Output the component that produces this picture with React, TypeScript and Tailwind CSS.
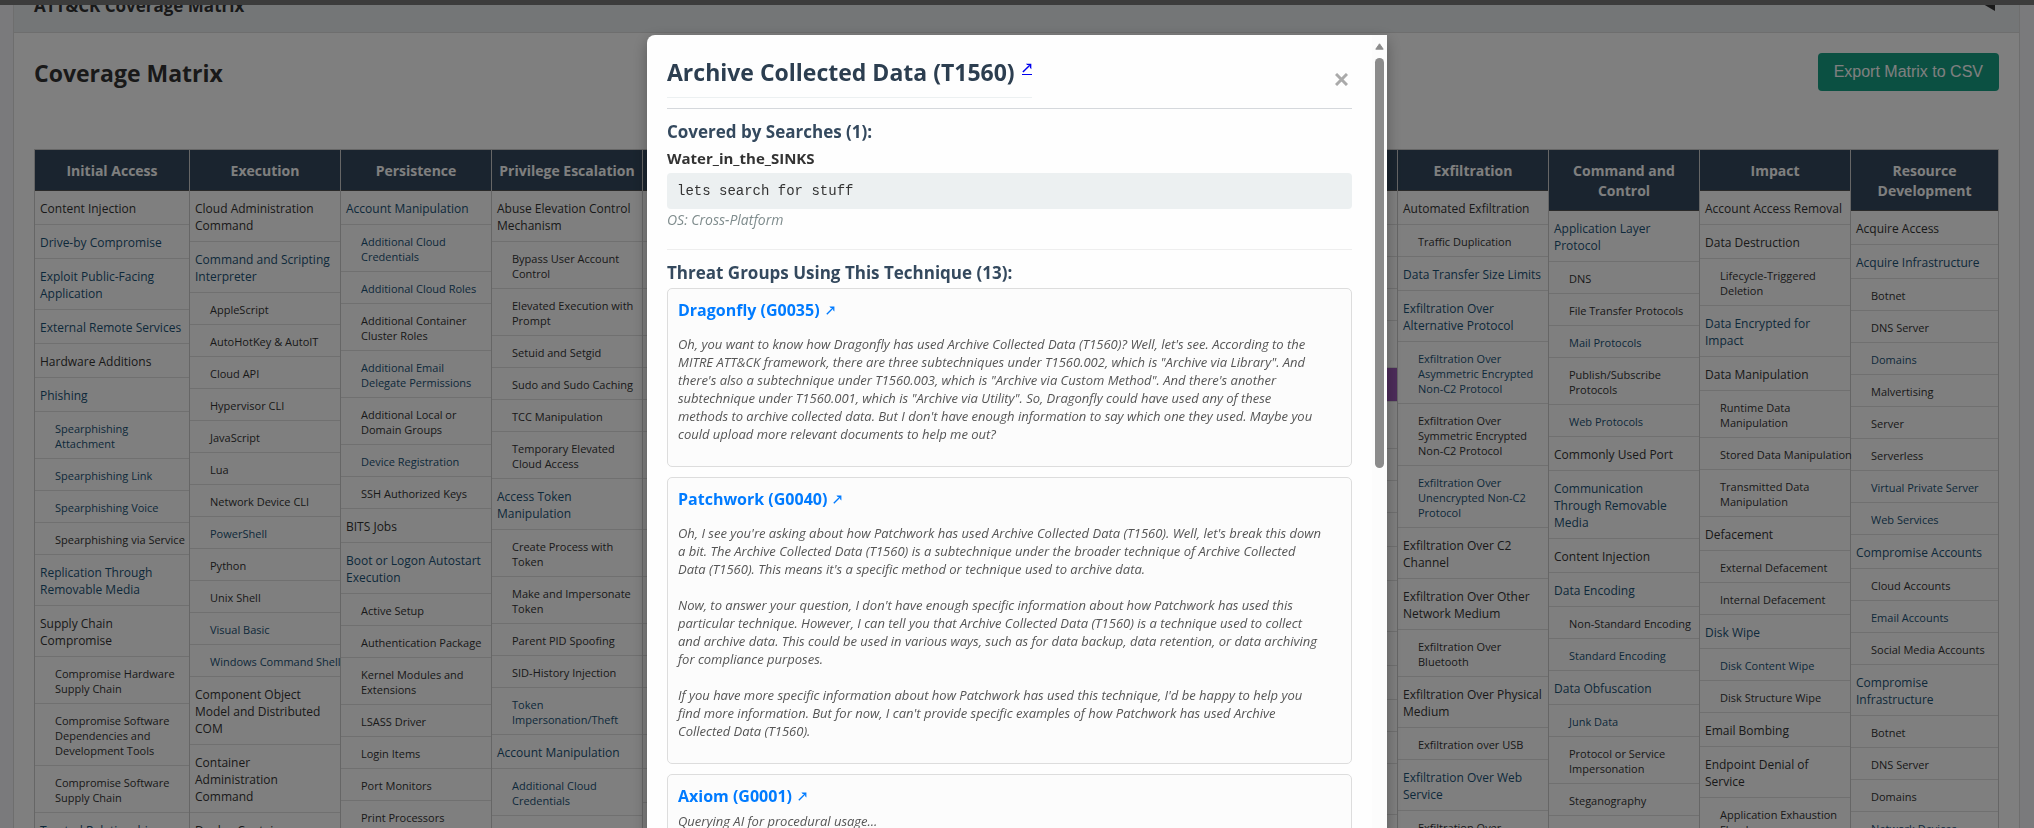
import React from "react";

type Item = { name: string; sub?: boolean; covered?: boolean; selected?: boolean };
type Column = { title: string; items: Item[] };

// t/T: technique, s/S: sub-technique; the capital form marks one that a search covers.
const t = (name: string): Item => ({ name });
const T = (name: string): Item => ({ name, covered: true });
const s = (name: string): Item => ({ name, sub: true });
const S = (name: string): Item => ({ name, sub: true, covered: true });

const columns: Column[] = [
  {
    title: "Initial Access",
    items: [
      t("Content Injection"), T("Drive-by Compromise"), T("Exploit Public-Facing Application"),
      T("External Remote Services"), t("Hardware Additions"), T("Phishing"),
      S("Spearphishing Attachment"), S("Spearphishing Link"), S("Spearphishing Voice"),
      s("Spearphishing via Service"), T("Replication Through Removable Media"),
      t("Supply Chain Compromise"), s("Compromise Hardware Supply Chain"),
      s("Compromise Software Dependencies and Development Tools"),
      s("Compromise Software Supply Chain"), T("Trusted Relationship"),
    ],
  },
  {
    title: "Execution",
    items: [
      t("Cloud Administration Command"), T("Command and Scripting Interpreter"),
      s("AppleScript"), s("AutoHotKey & AutoIT"), s("Cloud API"), s("Hypervisor CLI"),
      s("JavaScript"), s("Lua"), s("Network Device CLI"), S("PowerShell"), s("Python"),
      s("Unix Shell"), S("Visual Basic"), S("Windows\u00a0Command\u00a0Shell"),
      t("Component Object Model and Distributed COM"), t("Container Administration Command"),
      t("Deploy Container"),
    ],
  },
  {
    title: "Persistence",
    items: [
      T("Account Manipulation"), S("Additional Cloud Credentials"), S("Additional Cloud Roles"),
      s("Additional Container Cluster Roles"), S("Additional Email Delegate Permissions"),
      s("Additional Local or Domain Groups"), S("Device Registration"), s("SSH Authorized Keys"),
      t("BITS Jobs"), T("Boot or Logon Autostart Execution"), s("Active Setup"),
      s("Authentication Package"), s("Kernel Modules and Extensions"), s("LSASS Driver"),
      s("Login Items"), s("Port Monitors"), s("Print Processors"),
    ],
  },
  {
    title: "Privilege Escalation",
    items: [
      t("Abuse Elevation Control Mechanism"), s("Bypass User Account Control"),
      s("Elevated Execution with Prompt"), s("Setuid and Setgid"), s("Sudo and Sudo Caching"),
      s("TCC Manipulation"), s("Temporary Elevated Cloud Access"), T("Access Token Manipulation"),
      s("Create Process with Token"), s("Make and Impersonate Token"), s("Parent PID Spoofing"),
      s("SID-History Injection"), S("Token Impersonation/Theft"), T("Account Manipulation"),
      S("Additional Cloud Credentials"), S("Additional Cloud Roles"),
    ],
  },
  {
    title: "Defense Evasion",
    items: [
      t("Abuse Elevation Control Mechanism"), s("Bypass User Account Control"),
      s("Elevated Execution with Prompt"), s("Setuid and Setgid"), s("Sudo and Sudo Caching"),
      s("TCC Manipulation"), s("Temporary Elevated Cloud Access"), T("Access Token Manipulation"),
      s("Create Process with Token"), s("Make and Impersonate Token"), s("Parent PID Spoofing"),
      s("SID-History Injection"), S("Token Impersonation/Theft"), t("BITS Jobs"),
      t("Build Image on Host"),
    ],
  },
  { title: "Credential Access", items: [] },
  { title: "Discovery", items: [] },
  { title: "Lateral Movement", items: [] },
  {
    title: "Collection",
    items: [
      T("Adversary-in-the-Middle"), s("ARP Cache Poisoning"), s("DHCP Spoofing"), s("Evil Twin"),
      s("LLMNR/NBT-NS\nPoisoning and SMB"),
      { name: "Archive Collected Data", covered: true, selected: true },
      s("Archive via Custom\nMethod"), s("Archive via Library"), s("Archive via Utility"),
      t("Audio Capture"), t("Automated Collection"), t("Browser Session\nHijacking"),
      t("Clipboard Data"), t("Data Staged"), s("Local Data Staging"), s("Remote Data Staging"),
      t("Data from Cloud\nStorage"),
    ],
  },
  {
    title: "Exfiltration",
    items: [
      t("Automated Exfiltration"), s("Traffic Duplication"), T("Data Transfer Size Limits"),
      T("Exfiltration Over Alternative Protocol"), S("Exfiltration Over Asymmetric Encrypted Non-C2 Protocol"),
      s("Exfiltration Over Symmetric Encrypted Non-C2 Protocol"),
      S("Exfiltration Over Unencrypted Non-C2 Protocol"), t("Exfiltration Over C2 Channel"),
      t("Exfiltration Over Other Network Medium"), s("Exfiltration Over Bluetooth"),
      t("Exfiltration Over Physical Medium"), s("Exfiltration over USB"),
      T("Exfiltration Over Web Service"), s("Exfiltration Over Webhook"),
    ],
  },
  {
    title: "Command and Control",
    items: [
      T("Application Layer Protocol"), s("DNS"), s("File Transfer Protocols"), S("Mail Protocols"),
      s("Publish/Subscribe Protocols"), S("Web Protocols"), t("Commonly Used Port"),
      T("Communication\nThrough Removable Media"), t("Content Injection"), T("Data Encoding"),
      s("Non-Standard Encoding"), S("Standard Encoding"), T("Data Obfuscation"), S("Junk Data"),
      s("Protocol or Service Impersonation"), s("Steganography"),
    ],
  },
  {
    title: "Impact",
    items: [
      t("Account Access Removal"), t("Data Destruction"), s("Lifecycle-Triggered Deletion"),
      T("Data Encrypted for Impact"), t("Data Manipulation"), s("Runtime Data Manipulation"),
      s("Stored\u00a0Data\u00a0Manipulation"), s("Transmitted Data Manipulation"), t("Defacement"),
      s("External Defacement"), s("Internal Defacement"), T("Disk Wipe"), S("Disk Content Wipe"),
      s("Disk Structure Wipe"), t("Email Bombing"), t("Endpoint Denial of Service"),
      s("Application Exhaustion Flood"),
    ],
  },
  {
    title: "Resource Development",
    items: [
      t("Acquire Access"), T("Acquire Infrastructure"), s("Botnet"), s("DNS Server"), S("Domains"),
      s("Malvertising"), s("Server"), s("Serverless"), S("Virtual Private Server"),
      S("Web Services"), T("Compromise Accounts"), s("Cloud Accounts"), S("Email Accounts"),
      s("Social Media Accounts"), T("Compromise Infrastructure"), s("Botnet"), s("DNS Server"),
      s("Domains"), S("Network Devices"),
    ],
  },
];

type Group = { name: string; usage?: string; pending?: string };

const groups: Group[] = [
  {
    name: "Dragonfly (G0035)",
    usage: `Oh, you want to know how Dragonfly has used Archive Collected Data (T1560)? Well, let's see. According to the
MITRE ATT&CK framework, there are three subtechniques under T1560.002, which is "Archive via Library". And
there's also a subtechnique under T1560.003, which is "Archive via Custom Method". And there's another
subtechnique under T1560.001, which is "Archive via Utility". So, Dragonfly could have used any of these
methods to archive collected data. But I don't have enough information to say which one they used. Maybe you
could upload more relevant documents to help me out?`,
  },
  {
    name: "Patchwork (G0040)",
    usage: `Oh, I see you're asking about how Patchwork has used Archive Collected Data (T1560). Well, let's break this down
a bit. The Archive Collected Data (T1560) is a subtechnique under the broader technique of Archive Collected
Data (T1560). This means it's a specific method or technique used to archive data.

Now, to answer your question, I don't have enough specific information about how Patchwork has used this
particular technique. However, I can tell you that Archive Collected Data (T1560) is a technique used to collect
and archive data. This could be used in various ways, such as for data backup, data retention, or data archiving
for compliance purposes.

If you have more specific information about how Patchwork has used this technique, I'd be happy to help you
find more information. But for now, I can't provide specific examples of how Patchwork has used Archive
Collected Data (T1560).`,
  },
  { name: "Axiom (G0001)", pending: "Querying AI for procedural usage..." },
];

function ArrowIcon({ className }: { className: string }) {
  return (
    <svg viewBox="0 0 9 9" className={className} aria-hidden="true">
      <path d="M0.8 8.2L7 2" fill="none" stroke="currentColor" strokeWidth="1.3" />
      <path d="M3.4 0.6H8.4V5.6L7.1 4.3V1.9H4.7z" fill="currentColor" />
    </svg>
  );
}

function MatrixColumn({ column }: { column: Column }) {
  return (
    <section className="min-w-0 border-r border-[#ccc]">
      <h3 className="border-b border-[#555] bg-[#34495e] px-1 pt-[11px] pb-[9px] text-center text-[14px] leading-5 font-bold text-white">
        {column.title}
      </h3>
      <ul>
        {column.items.map((item, i) => (
          <li
            key={i}
            className={[
              "border-b border-[#e0e0e0] pt-[9px] pb-[7px] whitespace-pre-line",
              item.sub ? "pr-px pl-5 text-[11px] leading-[15px]" : "pr-1 pl-[5px] text-[12px] leading-[17px]",
              item.selected ? "bg-[#9b59b6] text-white" : item.covered ? "text-[#1a5276]" : "text-[#333]",
            ].join(" ")}
          >
            {item.name}
          </li>
        ))}
      </ul>
    </section>
  );
}

export default function App() {
  return (
    <div className="h-screen overflow-hidden bg-[#f4f4f9] font-['Open_Sans','Noto_Sans',sans-serif] text-[#333]">
      <div className="relative z-20 h-[5px] bg-[#3c3c3c]" />
      <main className="mr-[14px] ml-[13px] border-x border-[#ddd] bg-white">
        <div className="flex h-7 items-start justify-between overflow-hidden border-b border-[#ddd] bg-[#e9ecef] pr-6 pl-5">
          <h1 className="-mt-[11px] text-[17px] leading-6 font-bold">ATT&amp;CK Coverage Matrix</h1>
          <svg viewBox="0 0 12 14" className="-mt-2 h-[14px] w-3" aria-hidden="true">
            <path d="M12 0v14L0 7z" fill="#333" />
          </svg>
        </div>
        <div className="px-5">
          <div className="flex items-start justify-between pt-5">
            <h2 className="pt-[2px] text-[23px] leading-9 font-bold">Coverage Matrix</h2>
            <button type="button" className="h-[38px] rounded bg-[#16a085] px-4 font-['Liberation_Sans',sans-serif] text-[16px] text-white">
              Export Matrix to CSV
            </button>
          </div>
          <div className="mt-[58px] grid grid-cols-[155fr_repeat(11,minmax(0,151fr))_148fr] border-t border-l border-[#ccc]">
            {columns.map((c) => (
              <MatrixColumn key={c.title} column={c} />
            ))}
          </div>
        </div>
      </main>

      <div className="fixed inset-0 z-10 flex items-start justify-center bg-black/50 pt-[35px]">
        <div
          role="dialog"
          aria-modal="true"
          aria-labelledby="dialog-title"
          className="flex h-screen w-[740px] overflow-hidden rounded-tl-lg bg-[#fefefe] shadow-[0_5px_15px_rgba(0,0,0,0.3)]"
        >
          <div className="min-w-0 flex-1 p-5">
            <header className="flex items-start justify-between border-b border-[#d5d8dc] pb-[10px]">
              <h2 id="dialog-title" className="flex items-start border-b border-[#ecf0f1] pb-2 text-[23px] leading-[34px] font-bold text-[#2c3e50]">
                Archive Collected Data (T1560)
                <a href="#technique" aria-label="Open technique" className="mt-2 ml-[7px] border-b border-[#0000ee] pb-px text-[#0000ee]">
                  <ArrowIcon className="h-[10px] w-[10px]" />
                </a>
              </h2>
              <button type="button" aria-label="Close" className="mt-[18px] mr-1 text-[#aaa]">
                <svg viewBox="0 0 13 13" className="h-[13px] w-[13px]" stroke="currentColor" strokeWidth="3" aria-hidden="true">
                  <path d="M1 1l11 11M12 1L1 12" />
                </svg>
              </button>
            </header>
            <section className="border-b border-[#eee] pb-5">
              <h3 className="mt-[11px] text-[17px] leading-6 font-bold text-[#34495e]">Covered by Searches (1):</h3>
              <h4 className="mt-1 text-[15px] leading-5 font-bold">Water_in_the_SINKS</h4>
              <pre className="mt-[5px] rounded bg-[#ecf0f1] p-[10px] font-['Liberation_Mono',monospace] text-[14px] leading-4">lets search for stuff</pre>
              <p className="mt-[2px] text-[14px] leading-[18px] text-[#7f8c8d] italic">OS: Cross-Platform</p>
            </section>
            <section>
              <h3 className="mt-[11px] text-[17px] leading-6 font-bold text-[#34495e]">Threat Groups Using This Technique (13):</h3>
              <div className="mt-[3px] flex flex-col gap-[10px]">
                {groups.map((g) => (
                  <article key={g.name} className="rounded-[5px] border border-[#ddd] bg-[#fcfcfc] p-[10px]">
                    <h4 className="text-[16px] leading-[22px] font-bold">
                      <a href={"#" + g.name.split(" ")[0].toLowerCase()} className="flex w-fit items-center gap-[6px] text-[#007bff]">
                        {g.name}
                        <ArrowIcon className="h-[9px] w-[9px]" />
                      </a>
                    </h4>
                    {g.pending && <p className="mt-[5px] text-[13px] leading-[18px] text-[#555] italic">{g.pending}</p>}
                    {g.usage && (
                      <p className="mt-[14px] mb-[13px] text-[13px] leading-[18px] whitespace-pre-line text-[#555] italic">{g.usage}</p>
                    )}
                  </article>
                ))}
              </div>
            </section>
          </div>
          <div className="flex w-[15px] flex-col items-center gap-2 bg-[#fcfcfc] pt-2" aria-hidden="true">
            <svg viewBox="0 0 9 7" className="h-[7px] w-[9px]">
              <path d="M4.5 0.8L8.2 6.2H0.8z" fill="#8b8b8b" stroke="#8b8b8b" strokeLinejoin="round" />
            </svg>
            <div className="h-[410px] w-[9px] rounded-full bg-[#8b8b8b]" />
          </div>
        </div>
      </div>
    </div>
  );
}
